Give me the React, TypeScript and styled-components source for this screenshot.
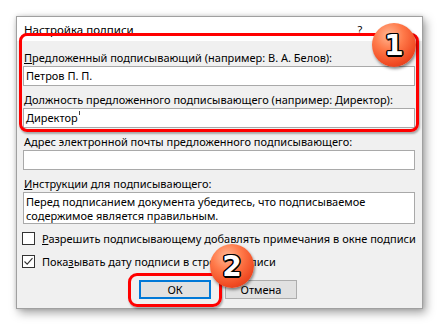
import styled, { createGlobalStyle } from "styled-components";

const GlobalStyle = createGlobalStyle`
  html, body {
    margin: 0;
    padding: 0;
    background: #fff;
  }
  body {
    font-family: "Noto Sans", "Liberation Sans", sans-serif;
    font-size: 11px;
    color: #000;
  }
`;

const fields = [
  {
    key: "П",
    rest: "редложенный подписывающий (например: В. А. Белов):",
    value: "Петров П. П.",
  },
  {
    key: "Д",
    rest: "олжность предложенного подписывающего (например: Директор):",
    value: "Директор",
    caret: true,
  },
  {
    pre: "А",
    key: "д",
    rest: "рес электронной почты предложенного подписывающего:",
    value: "",
  },
];

const App = () => {
  return (
    <Page>
      <GlobalStyle />
      <Dialog>
        <TitleBar>
          <Title>Настройка подписи</Title>
          <Help>?</Help>
        </TitleBar>
        <Body>
          {fields.map((f) => (
            <Field key={f.rest}>
              <Label>
                {f.pre}
                <u>{f.key}</u>
                {f.rest}
              </Label>
              <TextBox>
                {f.value}
                {f.caret && <Caret />}
              </TextBox>
            </Field>
          ))}
          <Field>
            <Label>
              <u>И</u>нструкции для подписывающего:
            </Label>
            <TextArea>
              Перед подписанием документа убедитесь, что подписываемое
              <br />
              содержимое является правильным.
            </TextArea>
          </Field>
          <CheckRow>
            <CheckBox />
            <span>
              <u>Р</u>азрешить подписывающему добавлять примечания в окне
              подписи
            </span>
          </CheckRow>
          <CheckRow>
            <CheckBox>
              <svg width="11" height="11" viewBox="0 0 11 11">
                <path
                  d="M1.5 5.5 L4.2 8.2 L9.5 2.2"
                  fill="none"
                  stroke="#333"
                  strokeWidth="1.1"
                />
              </svg>
            </CheckBox>
            <span>
              Пока<u>з</u>ывать дату подписи в строке подписи
            </span>
          </CheckRow>
          <Buttons>
            <Button $default>ОК</Button>
            <Button>Отмена</Button>
          </Buttons>
        </Body>

        {/* annotation overlays */}
        <Frame $top={16} $left={2} $width={400} $height={99} $radius={8} />
        <Frame $top={256} $left={111} $width={94} $height={34} $radius={9} />
        <Badge $cx={377} $cy={28}>1</Badge>
        <Badge $cx={215} $cy={249}>2</Badge>
      </Dialog>
    </Page>
  );
};

const Page = styled.div`
  padding: 16px 0 0 16px;
  height: 326px;
  box-sizing: border-box;
`;

const Dialog = styled.div`
  position: relative;
  width: 407px;
  height: 293px;
  box-sizing: border-box;
  background: #f0f0f0;
  border: 1px solid #a0a0a0;
  box-shadow: 3px 4px 9px rgba(0, 0, 0, 0.35), 0 0 4px rgba(0, 0, 0, 0.15);
`;

const TitleBar = styled.div`
  display: flex;
  align-items: center;
  height: 24px;
  padding: 0 0 0 7px;
  background: #fff;
`;

const Title = styled.div`
  flex: 1;
  font-size: 11.5px;
`;

const Help = styled.div`
  width: 14px;
  margin-right: 55px;
  text-align: center;
`;

const Body = styled.div`
  padding: 9px 7px 0 6px;
`;

const Field = styled.div`
  & + & {
    margin-top: 6px;
  }
`;

const Label = styled.div`
  height: 16px;
  line-height: 16px;
  padding-left: 1px;
  white-space: nowrap;
`;

const TextBox = styled.div`
  height: 20px;
  line-height: 18px;
  box-sizing: border-box;
  background: #fff;
  border: 1px solid #a9a9a9;
  padding-left: 2px;
  white-space: nowrap;
`;

const Caret = styled.span`
  display: inline-block;
  width: 1px;
  height: 4px;
  margin-left: 1px;
  vertical-align: 7px;
  background: #444;
`;

const TextArea = styled.div`
  height: 32px;
  box-sizing: border-box;
  background: #fff;
  border: 1px solid #a9a9a9;
  padding: 2px 0 0 2px;
  line-height: 14px;
  white-space: nowrap;
  overflow: hidden;
`;

const CheckRow = styled.div`
  display: flex;
  align-items: center;
  gap: 7px;
  height: 17px;
  margin-top: 6px;
  margin-left: -1px;
  white-space: nowrap;
`;

const CheckBox = styled.div`
  flex-shrink: 0;
  width: 13px;
  height: 13px;
  box-sizing: border-box;
  background: #fff;
  border: 1px solid #333;
  display: flex;
  align-items: center;
  justify-content: center;
`;

const Buttons = styled.div`
  display: flex;
  justify-content: center;
  gap: 14px;
  margin-top: 10px;
  padding-right: 2px;
`;

const Button = styled.div<{ $default?: boolean }>`
  width: 72px;
  height: 19px;
  box-sizing: border-box;
  display: flex;
  align-items: center;
  justify-content: center;
  background: #e1e1e1;
  border: ${(p) => (p.$default ? "2px solid #0078d7" : "1px solid #adadad")};
`;

const Frame = styled.div<{
  $top: number;
  $left: number;
  $width: number;
  $height: number;
  $radius: number;
}>`
  position: absolute;
  top: ${(p) => p.$top}px;
  left: ${(p) => p.$left}px;
  width: ${(p) => p.$width}px;
  height: ${(p) => p.$height}px;
  box-sizing: border-box;
  border: 3px solid #f00;
  border-radius: ${(p) => p.$radius}px;
  box-shadow: 1px 2px 2px rgba(0, 0, 0, 0.3);
  pointer-events: none;
`;

const Badge = styled.div<{ $cx: number; $cy: number }>`
  position: absolute;
  left: ${(p) => p.$cx - 22}px;
  top: ${(p) => p.$cy - 22}px;
  width: 44px;
  height: 44px;
  border-radius: 50%;
  background: radial-gradient(
    circle at 38% 28%,
    #ffb794 0%,
    #ff7a4a 35%,
    #f04a22 70%,
    #c8321a 100%
  );
  box-shadow: 1px 2px 3px rgba(0, 0, 0, 0.45);
  display: flex;
  align-items: center;
  justify-content: center;
  font-family: "DejaVu Sans", sans-serif;
  font-weight: bold;
  font-size: 28px;
  color: #fff;
  text-shadow: -1.5px 0 #000, 1.5px 0 #000, 0 -1.5px #000, 0 1.5px #000,
    -1px -1px #000, 1px 1px #000, -1px 1px #000, 1px -1px #000;
`;

export default App;
